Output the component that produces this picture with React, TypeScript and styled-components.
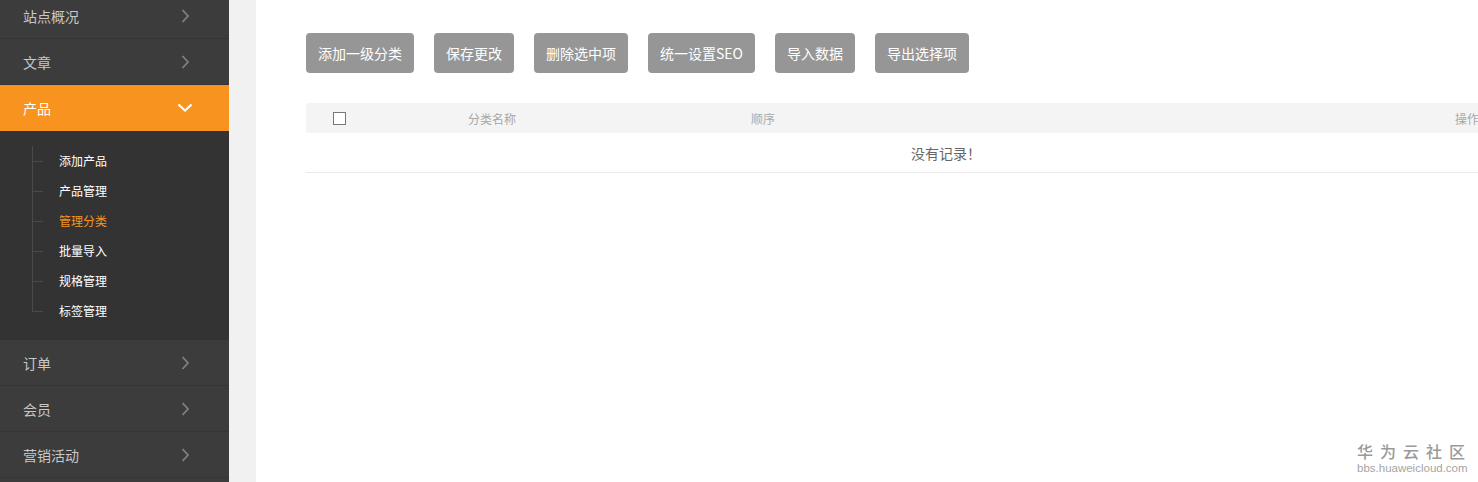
import React from "react";
import styled, { createGlobalStyle } from "styled-components";

const Global = createGlobalStyle`
  html, body { margin: 0; padding: 0; overflow: hidden; background: #f1f1f1; }
  body { font-family: "Noto Sans CJK SC", "Liberation Sans", sans-serif; }
  * { box-sizing: border-box; }
`;

const Page = styled.div`
  display: flex;
  width: 1478px;
  height: 482px;
  overflow: hidden;
  position: relative;
  background: #f1f1f1;
`;

const Sidebar = styled.nav`
  flex: 0 0 229px;
  background: #3c3c3c;
  margin-top: -7px;
  height: 489px;
  overflow: hidden;
`;

const MenuRow = styled.div<{ $active?: boolean }>`
  height: 46px;
  display: flex;
  align-items: center;
  justify-content: space-between;
  padding: 0 36px 0 23px;
  font-size: 14px;
  color: ${(p) => (p.$active ? "#ffffff" : "#c8c8c8")};
  background: ${(p) => (p.$active ? "#f7931e" : "#3c3c3c")};
  border-bottom: 1px solid ${(p) => (p.$active ? "#f7931e" : "#353535")};
`;

const IconBox = styled.span`
  width: 16px;
  display: flex;
  justify-content: center;
  align-items: center;
`;

const SubMenu = styled.ul`
  list-style: none;
  margin: 0;
  padding: 15px 0 14px 0;
  background: #333333;
  position: relative;
  &::before {
    content: "";
    position: absolute;
    left: 32px;
    top: 15px;
    height: 166px;
    width: 1px;
    background: #4a4a4a;
  }
`;

const SubItem = styled.li<{ $active?: boolean }>`
  height: 30px;
  line-height: 30px;
  padding-left: 59px;
  font-size: 12px;
  font-weight: 400;
  color: ${(p) => (p.$active ? "#f7931e" : "#ffffff")};
  position: relative;
  &::before {
    content: "";
    position: absolute;
    left: 32px;
    top: 15px;
    width: 11px;
    height: 1px;
    background: #4a4a4a;
  }
`;

const Gutter = styled.div`
  flex: 0 0 27px;
`;

const Main = styled.main`
  flex: 0 0 auto;
  width: 1380px;
  background: #ffffff;
  padding: 33px 50px;
`;

const Toolbar = styled.div`
  display: flex;
  gap: 20px;
  width: 1280px;
`;

const Button = styled.button<{ $push?: boolean }>`
  height: 40px;
  padding: 0 12px;
  border: none;
  border-radius: 4px;
  background: #969696;
  color: #ffffff;
  font-family: inherit;
  font-size: 14px;
  white-space: nowrap;
  margin-left: ${(p) => (p.$push ? "auto" : "0")};
`;

const Table = styled.div`
  width: 1280px;
  margin-top: 30px;
`;

const HeaderRow = styled.div`
  display: grid;
  grid-template-columns: 162px 283px 704px 131px;
  align-items: center;
  height: 30px;
  background: #f4f4f4;
  border-radius: 2px;
  font-size: 12px;
  color: #a8a8a8;
`;

const CheckCell = styled.div`
  padding-left: 27px;
  display: flex;
  align-items: center;
`;

const CheckBox = styled.span`
  display: block;
  width: 13px;
  height: 13px;
  border: 1px solid #777;
  background: #fff;
`;

const EmptyRow = styled.div`
  height: 40px;
  display: flex;
  align-items: center;
  justify-content: center;
  font-size: 14px;
  color: #666;
  border-bottom: 1px solid #e9e9e9;
`;

const Watermark = styled.div`
  position: absolute;
  left: 1357px;
  top: 441px;
  width: 108px;
  display: flex;
  flex-direction: column;
  align-items: flex-start;
  gap: 1px;
  color: #9a9a9a;
`;

const WmTitle = styled.span`
  font-size: 16px;
  letter-spacing: 7px;
  line-height: 20px;
  font-weight: 500;
  white-space: nowrap;
`;

const WmUrl = styled.span`
  font-family: "Liberation Sans", Arial, sans-serif;
  font-size: 11.5px;
  line-height: 13px;
  color: #a5a5a5;
  white-space: nowrap;
`;

const Chevron = ({ down }: { down?: boolean }) =>
  down ? (
    <svg width="16" height="10" viewBox="0 0 16 10">
      <polyline points="1.5,1.5 8,7.5 14.5,1.5" fill="none" stroke="#fff" strokeWidth="2.2" />
    </svg>
  ) : (
    <svg width="9" height="14" viewBox="0 0 9 14">
      <polyline points="1.5,1 7,7 1.5,13" fill="none" stroke="#808080" strokeWidth="1.8" />
    </svg>
  );

const topMenu = ["站点概况", "文章"];
const bottomMenu = ["订单", "会员", "营销活动"];
const subs = ["添加产品", "产品管理", "管理分类", "批量导入", "规格管理", "标签管理"];
const buttons = ["添加一级分类", "保存更改", "删除选中项", "统一设置SEO", "导入数据", "导出选择项"];

export default function App() {
  return (
    <>
      <Global />
      <Page>
        <Sidebar>
          {topMenu.map((m) => (
            <MenuRow key={m}>
              <span>{m}</span>
              <IconBox>
                <Chevron />
              </IconBox>
            </MenuRow>
          ))}
          <MenuRow $active>
            <span>产品</span>
            <IconBox>
              <Chevron down />
            </IconBox>
          </MenuRow>
          <SubMenu>
            {subs.map((s) => (
              <SubItem key={s} $active={s === "管理分类"}>
                {s}
              </SubItem>
            ))}
          </SubMenu>
          {bottomMenu.map((m) => (
            <MenuRow key={m}>
              <span>{m}</span>
              <IconBox>
                <Chevron />
              </IconBox>
            </MenuRow>
          ))}
        </Sidebar>
        <Gutter />
        <Main>
          <Toolbar>
            {buttons.map((b) => (
              <Button key={b}>{b}</Button>
            ))}
            <Button $push>展开全部分类</Button>
          </Toolbar>
          <Table>
            <HeaderRow>
              <CheckCell>
                <CheckBox />
              </CheckCell>
              <span>分类名称</span>
              <span>顺序</span>
              <span>操作</span>
            </HeaderRow>
            <EmptyRow>没有记录！</EmptyRow>
          </Table>
        </Main>
        <Watermark>
          <WmTitle>华为云社区</WmTitle>
          <WmUrl>bbs.huaweicloud.com</WmUrl>
        </Watermark>
      </Page>
    </>
  );
}
